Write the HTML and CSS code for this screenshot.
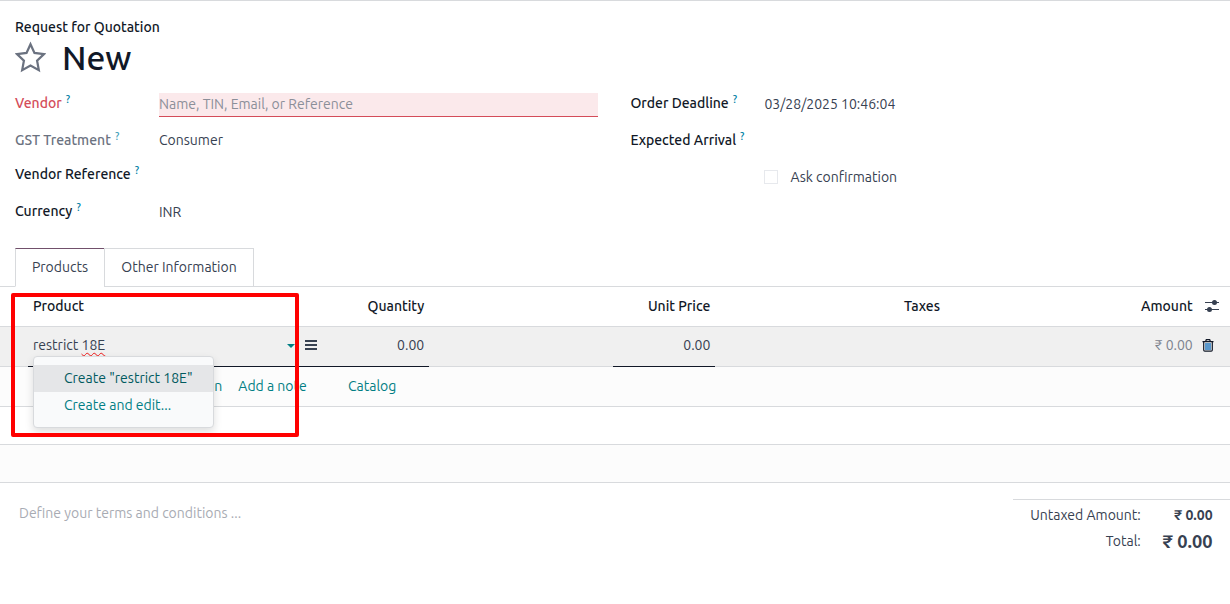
FILE: index.html
```html
<!DOCTYPE html>
<html lang="en">
<head>
<meta charset="utf-8">
<title>Request for Quotation</title>
<link rel="stylesheet" href="styles.css">
</head>
<body>
<main class="sheet">
  <header class="title">
    <div class="doc-type">Request for Quotation</div>
    <div class="name-row">
      <svg class="star" viewBox="0 0 32 32"><path d="M16 2.8l4.1 9 9.8 1.3-7.1 6.6 1.8 9.9-8.6-4.8-8.6 4.8 1.8-9.9-7.1-6.6 9.8-1.3z"/></svg>
      <h1>New</h1>
    </div>
  </header>

  <section class="fields">
    <div class="group">
      <div class="field vendor"><label class="required">Vendor<sup>?</sup></label><div class="input">Name, TIN, Email, or Reference</div></div>
      <div class="field gst"><label class="muted">GST Treatment<sup>?</sup></label><div class="value">Consumer</div></div>
      <div class="field reference"><label>Vendor Reference<sup>?</sup></label></div>
      <div class="field currency"><label>Currency<sup>?</sup></label><div class="value inr">INR</div></div>
    </div>
    <div class="group right">
      <div class="field deadline"><label>Order Deadline<sup>?</sup></label><div class="value date">03/28/2025 10:46:04</div></div>
      <div class="field arrival"><label>Expected Arrival<sup>?</sup></label></div>
      <div class="field confirm"><span class="checkbox"></span><span class="ask">Ask confirmation</span></div>
    </div>
  </section>

  <nav class="tabs"><div class="tab active">Products</div><div class="tab other">Other Information</div></nav>

  <section class="lines">
    <div class="row head">
      <div class="product">Product</div><div class="qty">Quantity</div><div class="price">Unit Price</div><div class="taxes">Taxes</div><div class="amount">Amount</div>
      <svg class="settings" viewBox="0 0 16 12"><path d="M1 2.5h14M1 9.5h14"/><circle cx="10.5" cy="2.5" r="1.9"/><circle cx="5.5" cy="9.5" r="1.9"/></svg>
    </div>
    <div class="row edit">
      <div class="product"><span class="entry">restrict <span class="typo">18E</span></span><i class="caret"></i><svg class="bars" viewBox="0 0 12 12"><path d="M0 2h12M0 6h12M0 10h12"/></svg></div>
      <div class="qty">0.00</div><div class="price">0.00</div><div class="taxes"></div><div class="amount">₹ 0.00</div>
      <svg class="trash" viewBox="0 0 12 13"><path class="slats" d="M4 4v7M6 4v7M8 4v7"/><path d="M.5 2.7h11M3.7 2.3l.6-1.6h3.4l.6 1.6M1.7 3v8.1q0 1.1 1.1 1.1h6.4q1.1 0 1.1-1.1V3"/></svg>
      <i class="focus-line wide"></i><i class="focus-line narrow"></i>
      <div class="dropdown"><div class="option selected">Create "restrict 18E"</div><div class="option second">Create and edit...</div></div>
      <div class="highlight"></div>
    </div>
    <div class="row actions"><a class="section">Add a section</a><a class="note">Add a note</a><a class="catalog">Catalog</a></div>
    <div class="row blank"></div>
    <div class="row blank shaded"></div>
  </section>

  <footer class="bottom">
    <div class="terms">Define your terms and conditions ...</div>
    <div class="totals">
      <span class="untaxed">Untaxed Amount:</span><b>₹ 0.00</b>
      <span class="total">Total:</span><b class="grand">₹ 0.00</b>
    </div>
  </footer>
</main>
</body>
</html>
```

FILE: styles.css
```css
* { box-sizing: border-box; }
body { margin: 0; background: #fff; color: #374151; font: 14px/20px Ubuntu, "Noto Sans", sans-serif; overflow: hidden; }
.sheet { width: 1230px; height: 604px; border-top: 1px solid #d8dadd; white-space: nowrap; }
.title { height: 91px; padding: 16px 15px 0; color: #111827; }
.doc-type { font-weight: 500; }
.name-row { display: flex; height: 42px; gap: 16px; align-items: center; }
.star { width: 31px; height: 32px; margin-bottom: 3px; fill: none; stroke: #6b7280; stroke-width: 2.3; }
h1 { margin: 0; font-size: 33.6px; line-height: 42px; font-weight: 500; }
.fields { display: flex; height: 156px; padding-left: 15px; }
.group { width: 583px; }
.right { margin-left: 32.4px; }
.field { display: flex; align-items: flex-start; }
label { width: 144px; color: #111827; font-weight: 500; }
.right label { width: 134px; }
label.required { color: #d44c59; }
label.muted { color: #6b7280; }
.muted sup { opacity: .75; }
sup { margin-left: 4px; color: #0180a5; font-size: 10.5px; font-weight: 500; line-height: 0; vertical-align: 5px; }
.vendor { height: 37px; padding-top: 1px; }
.input { width: 439px; height: 24px; border-bottom: 1px solid #d44c59; background: #fbe9eb; color: #8b8f99; line-height: 22px; }
.gst { height: 35px; padding-top: 1px; }
.reference { height: 37px; }
.currency { height: 24px; }
.inr { padding-top: 1px; }
.deadline { height: 37px; padding-top: 1px; }
.date { padding-top: 1px; }
.arrival { height: 38px; padding-top: 1px; }
.confirm { padding-left: 134px; align-items: center; height: 20px; gap: 12px; }
.checkbox { width: 14px; height: 14px; border: 1px solid #e7e9ed; }
.tabs { display: flex; height: 39px; padding-left: 15px; background: linear-gradient(#d8dadd, #d8dadd) bottom / 100% 1px no-repeat; }
.tab { height: 39px; border: 1px solid #d8dadd; line-height: 37px; text-align: center; }
.active { width: 90px; border-top-color: #71506b; border-bottom-color: #fff; }
.other { width: 150px; margin-left: -1px; }
.row { position: relative; display: flex; align-items: center; height: 40px; border-bottom: 1px solid #d8dadd; }
.head { color: #111827; font-weight: 500; padding-bottom: 2px; }
.product { display: flex; align-items: center; width: 317px; padding-left: 33px; }
.qty { width: 107.2px; text-align: right; }
.price { width: 286.2px; text-align: right; }
.taxes { width: 253.6px; padding-left: 193.6px; }
.amount { width: 228.8px; text-align: right; }
.settings { width: 16px; height: 12px; margin-left: 11.2px; fill: #374151; stroke: #374151; stroke-width: 1.2; }
.edit { background: #f0f0f0; padding-bottom: 3px; z-index: 1; }
.edit .amount { color: #7c828e; }
.entry { width: 254px; }
.typo { text-decoration: underline wavy #f01818 1.2px; text-underline-offset: 1.5px; text-decoration-skip-ink: none; }
.caret { border: 4px solid transparent; border-top-color: #017e84; border-bottom: 0; margin-top: 2px; }
.bars { width: 12px; height: 12px; margin-left: 10px; stroke: #374151; stroke-width: 2; }
.trash { width: 12px; height: 13px; margin: 0 0 0 9.2px; fill: none; stroke: #111827; stroke-width: 1.2; }
.trash .slats { stroke: #287bc1; stroke-width: 1.5; }
.focus-line { position: absolute; bottom: -1px; height: 1px; background: #111827; }
.wide { left: 28px; width: 401px; }
.narrow { left: 613px; width: 102px; }
.dropdown { position: absolute; left: 33px; top: 29px; width: 181px; height: 72px; padding-top: 8px; border: 1px solid #d8dadd; border-radius: 4px; background: #f9fafb; box-shadow: 0 4px 9px #0002; }
.option { height: 27px; padding-left: 30px; line-height: 27px; color: #017e84; }
.selected { background: #e5e6e8; color: #015a5f; }
.highlight { position: absolute; left: 11px; top: -34px; width: 288px; height: 144px; border: 4px solid #f00; border-radius: 2px; }
.actions { padding: 0 0 2px 134px; background: #fcfcfc; color: #017e84; }
.section { width: 88.3px; text-align: right; }
.note { margin-left: 16px; width: 109.7px; }
.blank { height: 38px; }
.shaded { background: #fcfcfc; }
.bottom { display: flex; justify-content: space-between; padding: 16px 0 0 19px; }
.terms { padding-top: 4px; color: #a8abb3; }
.totals { display: grid; grid-template-columns: 127.8px 71.8px; grid-template-rows: 26px 26px; width: 217px; padding-top: 2px; border-top: 1px solid #d8dadd; align-items: center; text-align: right; }
b { font-weight: 700; }
.grand { font-size: 18.2px; }
```
